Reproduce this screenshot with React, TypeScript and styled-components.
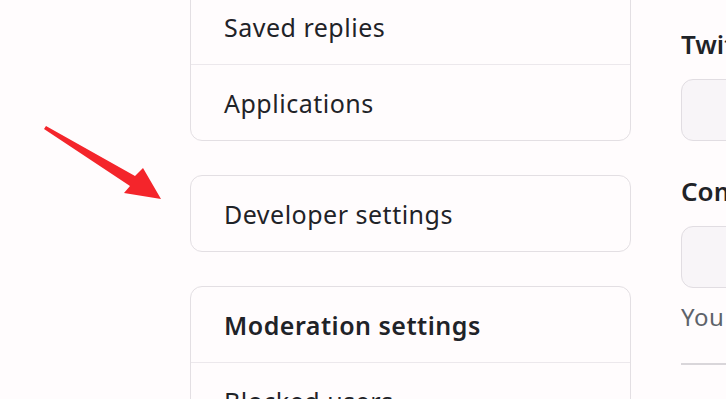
import React from "react";
import styled, { createGlobalStyle } from "styled-components";

const GlobalStyle = createGlobalStyle`
  html, body {
    margin: 0;
    padding: 0;
    background: #fffcfd;
    overflow: hidden;
  }
  body {
    font-family: "Noto Sans", "Open Sans", sans-serif;
    color: #1f2328;
  }
`;

export default function App() {
  return (
    <>
      <GlobalStyle />
      <StyledPage>
        <StyledSidebar>
          <StyledMenuCard>
            <StyledMenuItem>Saved replies</StyledMenuItem>
            <StyledMenuItem>Applications</StyledMenuItem>
          </StyledMenuCard>
          <StyledMenuCard>
            <StyledMenuItem>Developer settings</StyledMenuItem>
          </StyledMenuCard>
          <StyledMenuCard>
            <StyledMenuItem $heading>Moderation settings</StyledMenuItem>
            <StyledMenuItem>Blocked users</StyledMenuItem>
          </StyledMenuCard>
        </StyledSidebar>

        <StyledForm>
          <StyledLabel>Twitter username</StyledLabel>
          <StyledInput />
          <StyledLabel $spaced>Company</StyledLabel>
          <StyledInput />
          <StyledNote>
            You can @mention your company's GitHub organization to link it.
          </StyledNote>
          <StyledDivider />
        </StyledForm>

        <StyledArrow viewBox="0 0 726 399" aria-hidden="true">
          <polygon
            points="46,126 135,176 143,168 161,199 124,193 130,186 44,129"
            fill="#f4252b"
          />
        </StyledArrow>
      </StyledPage>
    </>
  );
}

const StyledPage = styled.main`
  position: relative;
  width: 726px;
  height: 399px;
  overflow: hidden;
  display: flex;
  align-items: flex-start;
  padding-left: 190px;
  box-sizing: border-box;
`;

const StyledSidebar = styled.nav`
  flex: 0 0 441px;
  margin-top: -12px;
  display: flex;
  flex-direction: column;
  gap: 34px;
`;

const StyledMenuCard = styled.div`
  border: 1px solid #e3dfe3;
  border-radius: 12px;
  background: #fffcfd;
  overflow: hidden;
`;

const StyledMenuItem = styled.div<{ $heading?: boolean }>`
  height: 75px;
  display: flex;
  align-items: center;
  padding: 0 33px;
  font-size: 25px;
  letter-spacing: 0.5px;
  font-weight: ${(p) => (p.$heading ? 600 : 400)};
  white-space: nowrap;

  & + & {
    border-top: 1px solid #ece8ec;
  }
`;

const StyledForm = styled.section`
  margin-left: 50px;
  padding-top: 25px;
  width: 600px;
  flex-shrink: 0;
  display: flex;
  flex-direction: column;
`;

const StyledLabel = styled.div<{ $spaced?: boolean }>`
  font-size: 26px;
  font-weight: 600;
  line-height: 39px;
  white-space: nowrap;
  margin-top: ${(p) => (p.$spaced ? "31px" : "0")};
`;

const StyledInput = styled.div`
  margin-top: 15px;
  height: 60px;
  border: 1px solid #e1dde2;
  border-radius: 12px;
  background: #f8f5f8;
`;

const StyledNote = styled.p`
  margin: 11px 0 0;
  font-size: 24px;
  line-height: 36px;
  letter-spacing: 0.5px;
  color: #5e636a;
  white-space: nowrap;
`;

const StyledDivider = styled.hr`
  margin: 28px 0 0;
  border: none;
  border-top: 2px solid #d9d6da;
`;

const StyledArrow = styled.svg`
  position: absolute;
  left: 0;
  top: 0;
  width: 726px;
  height: 399px;
  pointer-events: none;
`;
